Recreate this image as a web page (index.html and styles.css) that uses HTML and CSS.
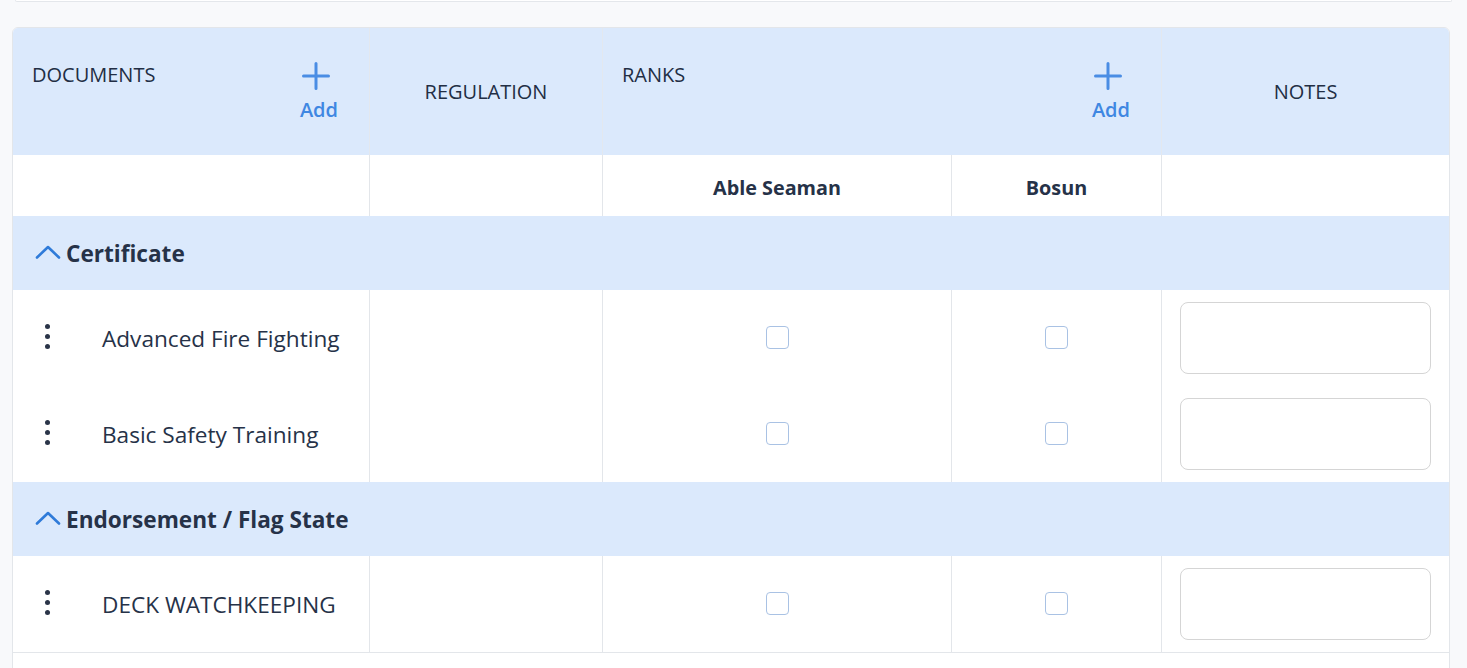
FILE: index.html
```html
<!DOCTYPE html>
<html lang="en">
<head>
<meta charset="utf-8">
<title>Document Matrix</title>
<link rel="stylesheet" href="styles.css">
</head>
<body>
<div class="top-card"></div>
<div class="card">
  <div class="grid">
    <div class="hcell hflex">
      <span class="hlabel">DOCUMENTS</span>
      <button class="add" type="button">
        <svg class="plus" viewBox="0 0 28 28" width="28" height="28"><path d="M14 1.5V26.5M1.5 14H26.5" fill="none" stroke="currentColor" stroke-width="3" stroke-linecap="round"/></svg>
        <span class="add-text">Add</span>
      </button>
    </div>
    <div class="hcell hcenter">REGULATION</div>
    <div class="hcell hflex span2">
      <span class="hlabel">RANKS</span>
      <button class="add" type="button">
        <svg class="plus" viewBox="0 0 28 28" width="28" height="28"><path d="M14 1.5V26.5M1.5 14H26.5" fill="none" stroke="currentColor" stroke-width="3" stroke-linecap="round"/></svg>
        <span class="add-text">Add</span>
      </button>
    </div>
    <div class="hcell hcenter last">NOTES</div>

    <div class="scell"></div>
    <div class="scell"></div>
    <div class="scell">Able Seaman</div>
    <div class="scell">Bosun</div>
    <div class="scell last"></div>

    <div class="group">
      <svg class="chev" viewBox="0 0 26 14" width="26" height="14"><path d="M2 12.5L13 2L24 12.5" fill="none" stroke="currentColor" stroke-width="2.6" stroke-linecap="round" stroke-linejoin="round"/></svg>
      <span class="group-title">Certificate</span>
    </div>

    <div class="cell doc"><span class="kebab"><i></i><i></i><i></i></span><span class="doc-name">Advanced Fire Fighting</span></div>
    <div class="cell"></div>
    <div class="cell center"><span class="cb"></span></div>
    <div class="cell center"><span class="cb"></span></div>
    <div class="cell note last"><textarea class="note-input" aria-label="Notes"></textarea></div>

    <div class="cell doc"><span class="kebab"><i></i><i></i><i></i></span><span class="doc-name">Basic Safety Training</span></div>
    <div class="cell"></div>
    <div class="cell center"><span class="cb"></span></div>
    <div class="cell center"><span class="cb"></span></div>
    <div class="cell note last"><textarea class="note-input" aria-label="Notes"></textarea></div>

    <div class="group">
      <svg class="chev" viewBox="0 0 26 14" width="26" height="14"><path d="M2 12.5L13 2L24 12.5" fill="none" stroke="currentColor" stroke-width="2.6" stroke-linecap="round" stroke-linejoin="round"/></svg>
      <span class="group-title">Endorsement / Flag State</span>
    </div>

    <div class="cell doc endrow"><span class="kebab"><i></i><i></i><i></i></span><span class="doc-name">DECK WATCHKEEPING</span></div>
    <div class="cell endrow"></div>
    <div class="cell center endrow"><span class="cb"></span></div>
    <div class="cell center endrow"><span class="cb"></span></div>
    <div class="cell note last endrow"><textarea class="note-input" aria-label="Notes"></textarea></div>
  </div>
  <div class="more"></div>
</div>
</body>
</html>
```

FILE: styles.css
```css
* { box-sizing: border-box; }

html, body {
  margin: 0;
  padding: 0;
  background: #f8f9fb;
  font-family: "Open Sans", "Noto Sans", sans-serif;
  color: #263248;
  overflow: hidden;
}

.top-card {
  height: 2px;
  margin: 0 15px 0 15px;
  background: #fff;
  border: 1px solid #e4e7eb;
  border-top: 0;
  border-radius: 0 0 6px 6px;
}

.card {
  margin: 25px 17px 0 12px;
  background: #fff;
  border: 1px solid #e3e6ea;
  border-radius: 6px;
  overflow: hidden;
}

.grid {
  display: grid;
  grid-template-columns: 357px 233px 349px 210px 287px;
}

.hcell {
  height: 127px;
  background: #dbe9fc;
  border-right: 1px solid #e3e8ef;
  font-size: 20px;
  font-weight: 500;
  color: #222e44;
}

.hcell.last, .scell.last, .cell.last { border-right: 0; }

.hcenter {
  display: flex;
  align-items: center;
  justify-content: center;
}

.hflex {
  display: flex;
  align-items: center;
  justify-content: space-between;
  padding: 0 31px 0 19px;
}

.hlabel {
  align-self: center;
  margin-bottom: 33px;
  line-height: 26px;
}

.span2 { grid-column: span 2; }

.add {
  display: flex;
  flex-direction: column;
  align-items: center;
  border: 0;
  background: none;
  padding: 0;
  margin-top: 1px;
  color: #3f87e2;
  font-family: inherit;
  cursor: pointer;
}

.plus { display: block; color: #4a8de4; }

.add-text {
  margin-top: 6px;
  font-size: 20px;
  font-weight: 600;
  line-height: 27px;
  padding-left: 5px;
}

.scell {
  height: 61px;
  background: #fff;
  border-right: 1px solid #e3e6ea;
  display: flex;
  align-items: center;
  justify-content: center;
  font-size: 19.8px;
  font-weight: 700;
  padding-top: 4px;
}

.group {
  grid-column: 1 / -1;
  height: 74px;
  background: #dbe9fc;
  display: flex;
  align-items: center;
  padding-left: 22px;
  gap: 5px;
}

.chev { display: block; color: #2f7bd9; margin-top: -3px; }

.group-title {
  font-size: 22.6px;
  font-weight: 700;
}

.cell {
  height: 96px;
  border-right: 1px solid #e3e6ea;
  background: #fff;
  display: flex;
  align-items: center;
}

.cell.endrow {
  height: 97px;
  border-bottom: 1px solid #e3e6ea;
}

.center { justify-content: center; }

.doc { padding-left: 22px; }

.kebab {
  width: 24px;
  display: flex;
  flex-direction: column;
  align-items: center;
  gap: 5px;
  margin-right: 43px;
  margin-top: -4px;
}

.kebab i {
  display: block;
  width: 5px;
  height: 5px;
  border-radius: 50%;
  background: #2a3448;
}

.doc-name {
  font-size: 22.6px;
  font-weight: 400;
}

.cb {
  display: block;
  width: 23px;
  height: 23px;
  border: 1.5px solid #a9c2e4;
  border-radius: 4px;
  background: #fff;
  margin-top: -2px;
}

.note {
  padding: 0 18px 0 18px;
}

.note-input {
  display: block;
  width: 251px;
  height: 72px;
  border: 1px solid #d5d5d5;
  border-radius: 8px;
  resize: none;
  background: #fff;
  font-family: inherit;
}

.more {
  height: 40px;
  background: #fff;
}
```
